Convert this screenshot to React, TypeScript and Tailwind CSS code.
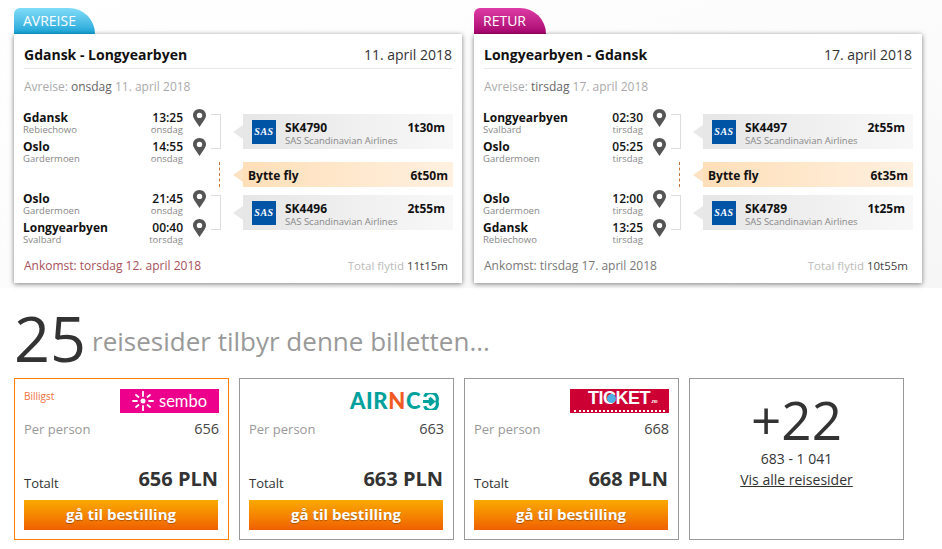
import React from "react";

const Pin = () => (
  <svg width="13" height="18" viewBox="0 0 13 18" className="block">
    <path fillRule="evenodd" fill="#555" d="M6.5 0C2.9 0 0 2.8 0 6.3c0 1.7.7 3 1.6 4.4L6.5 18l4.9-7.3c.9-1.4 1.6-2.7 1.6-4.4C13 2.8 10.100 0 6.500 0zm0 3.700a2.700 2.700 0 1 1 0 5.400 2.700 2.700 0 0 1 0-5.400z" />
  </svg>
);

const Stop = ({ city, place, time, day }: { city: string; place: string; time: string; day: string }) => (
  <div className="flex h-[29px]">
    <div className="w-[160px] flex justify-between">
      <div>
        <div className="text-[12px] leading-[14px] font-bold text-[#111]">{city}</div>
        <div className="text-[9.5px] leading-[11px] -mt-px text-[#888]">{place}</div>
      </div>
      <div className="text-right">
        <div className="text-[12px] leading-[14px] font-semibold text-[#111]">{time}</div>
        <div className="text-[9.5px] leading-[11px] -mt-px text-[#888]">{day}</div>
      </div>
    </div>
    <div className="ml-[10px] -mt-[2px]">
      <Pin />
    </div>
  </div>
);

const Flight = ({ code, dur }: { code: string; dur: string }) => (
  <div className="flex items-center">
    <div className="w-0 h-0 border-y-[7px] border-y-transparent border-r-[10px] border-r-[#e8e8e8]" />
    <div className="w-[210px] h-[35px] flex items-center pl-[9px] pr-[8px] bg-gradient-to-r from-[#e6e6e6] to-[#f8f8f8]">
      <div className="w-[24px] h-[24px] bg-[#0054a6] flex items-center justify-center shrink-0 text-white italic font-bold text-[10px] tracking-[0.5px] font-['Liberation_Serif',serif]">
        SAS
      </div>
      <div className="ml-[9px] flex-1 pt-[3px]">
        <div className="flex justify-between text-[12px] leading-[14px] font-bold text-[#111]">
          <span>{code}</span>
          <span>{dur}</span>
        </div>
        <div className="text-[9.5px] leading-[11px] text-[#888]">SAS Scandinavian Airlines</div>
      </div>
    </div>
  </div>
);

const Bracket = () => <div className="w-[10px] h-[35px] border border-l-0 border-[#ddd]" />;

type S = { city: string; place: string; time: string; day: string };

const Card = ({
  tag, tagCls, tagW, route, date, dep, stops, f1, f2, change, arrival, arrCls, total, totCls,
}: {
  tag: string; tagCls: string; tagW: string; route: string; date: string; dep: string; stops: S[];
  f1: [string, string]; f2: [string, string]; change: string; arrival: string; arrCls: string; total: string; totCls: string;
}) => (
  <div className="w-[448px]">
    <div className={`h-[26px] pl-[9px] rounded-tl-[6px] rounded-tr-[26px] text-[14px] leading-[26px] text-white ${tagW} ${tagCls}`}>{tag}</div>
    <div className="h-[249px] bg-white shadow-[0_1px_5px_rgba(0,0,0,0.5)] px-[10px]">
      <div className="h-[35px] pt-[6px] flex justify-between items-center border-b border-[#e8e8e8] text-[14px]">
        <span className="font-bold text-[#111]">{route}</span>
        <span className="text-[#333]">{date}</span>
      </div>
      <div className="h-[36px] flex items-center text-[12px] text-[#aaa]">
        <span>Avreise:&nbsp;</span>
        <span className="text-[#666]">{dep.split(" ")[0]}&nbsp;</span>
        <span>{dep.split(" ").slice(1).join(" ")}</span>
      </div>
      <div className="flex h-[139px] mt-[6px]">
        <div className="w-[184px] -ml-px">
          {stops.slice(0, 2).map((s) => <Stop key={s.city + s.time} {...s} />)}
          <div className="h-[23px]" />
          {stops.slice(2).map((s) => <Stop key={s.city + s.time} {...s} />)}
        </div>
        <div className="w-[10px] ml-[5px] mr-[12px] flex flex-col items-end pt-[3px]">
          <Bracket />
          <div className="h-[25px] mt-[13px] mr-px border-r border-dashed border-[#c8743c]" />
          <div className="mt-[8px]"><Bracket /></div>
        </div>
        <div className="pt-[3px]">
          <Flight code={f1[0]} dur={f1[1]} />
          <div className="flex items-center mt-[13px]">
            <div className="w-0 h-0 border-y-[7px] border-y-transparent border-r-[10px] border-r-[#fde3c4]" />
            <div className="w-[210px] h-[25px] pt-[2px] flex items-center justify-between pl-[5px] pr-[5px] bg-gradient-to-r from-[#ffdfb8] to-[#fff0e0] text-[12px] font-bold text-[#111]">
              <span>Bytte fly</span>
              <span>{change}</span>
            </div>
          </div>
          <div className="mt-[8px]"><Flight code={f2[0]} dur={f2[1]} /></div>
        </div>
      </div>
      <div className="flex justify-between items-center h-[24px] mt-[4px] text-[12px]">
        <span className={arrCls}>{arrival}</span>
        <span className="pr-[4px] text-[11.5px]">
          <span className="text-[#bbb]">Total flytid </span>
          <span className={totCls}>{total}</span>
        </span>
      </div>
    </div>
  </div>
);

const Sembo = () => (
  <div className="w-[99px] h-[24px] bg-[#ec008c] flex items-center justify-center gap-[5px] text-white text-[16.5px] font-['Lato',sans-serif]">
    <svg width="22" height="20" viewBox="-11 -10 22 20" stroke="#fff" strokeWidth="1.800" strokeLinecap="round">
      <circle cx="0" cy="0" r="2.500" fill="#fff" stroke="none" />
      <path d="M0-9.500V-5M0 5V9.500M-10 0H-6M6 0H10M-7-6L-4.500-4M7-6L4.500-4M-7 6L-4.500 4M7 6L4.500 4" />
    </svg>
    <span>sembo</span>
  </div>
);

const Airnco = () => (
  <div className="w-[99px] h-[24px] flex items-center justify-end pr-[5px] font-['Lato',sans-serif] font-black text-[22px] leading-none tracking-[0.6px] text-[#00a19c]">
    <span>AIR</span><span className="text-[#f15a22]">N</span><span>C</span>
    <svg width="17" height="17" viewBox="0 0 16 16" fill="none" stroke="#00a19c" strokeWidth="3" className="ml-px">
      <path d="M2.500 3.500A6 6 0 0 1 14 8 6 6 0 0 1 2.500 12.500M1 8H10M7 4.500L10.500 8 7 11.500" />
    </svg>
  </div>
);

const Ticket = () => (
  <div className="relative w-[99px] h-[24px] bg-[#cc0033] flex justify-center pl-[6px] text-white font-bold text-[18px] tracking-[-0.5px] leading-[19px] font-['Liberation_Sans',sans-serif]">
    <span>TI</span>
    <span className="relative">
      C
      <span className="absolute left-[4px] top-[5px] w-[9px] h-[9px] rounded-full bg-[#4fb0e6]" />
    </span>
    <span>KET</span>
    <span className="text-[5px] leading-[5px] mt-[10px] ml-px">.no</span>
    <div className="absolute left-[4px] right-[4px] bottom-[1px] border-b-2 border-dotted border-white" />
  </div>
);

const Offer = ({ logo, price, best }: { logo: React.ReactNode; price: string; best?: boolean }) => (
  <div className={`w-[215px] h-[162px] border px-[9px] pt-[10px] ${best ? "border-[#ff8000]" : "border-[#999]"}`}>
    <div className="flex justify-between items-start">
      <span className="text-[10px] leading-[14px] text-[#f2703a]">{best ? "Billigst" : ""}</span>
      {logo}
    </div>
    <div className="flex justify-between items-center mt-[8px] h-[18px]">
      <span className="text-[13px] text-[#999]">Per person</span>
      <span className="text-[14.5px] text-[#444] -mt-[2px]">{price}</span>
    </div>
    <div className="flex justify-between items-end mt-[29px] mr-px h-[24px]">
      <span className="text-[13px] leading-[18px] text-[#333]">Totalt</span>
      <span className="text-[20px] leading-[26px] font-bold text-[#333]">{price} PLN</span>
    </div>
    <div className="mt-[8px] mr-px pb-px h-[30px] flex items-center justify-center bg-gradient-to-b from-[#f9a900] to-[#ef5f00] text-[15px] font-bold text-white [text-shadow:0_1px_1px_rgba(0,0,0,0.3)]">
      gå til bestilling
    </div>
  </div>
);

export default function App() {
  return (
    <div className="w-[942px] h-[549px] bg-white overflow-hidden font-['Open_Sans',sans-serif]">
      <div className="h-[288px] pt-[8px] pl-[14px] flex gap-[12px] bg-gradient-to-br from-white via-[#fcfcfc] to-[#f6f6f6]">
        <Card
          tag="AVREISE" tagW="w-[81px]" tagCls="bg-gradient-to-b from-[#7fdcf8] to-[#0aa5d8]"
          route="Gdansk - Longyearbyen" date="11. april 2018" dep="onsdag 11. april 2018"
          stops={[
            { city: "Gdansk", place: "Rebiechowo", time: "13:25", day: "onsdag" },
            { city: "Oslo", place: "Gardermoen", time: "14:55", day: "onsdag" },
            { city: "Oslo", place: "Gardermoen", time: "21:45", day: "onsdag" },
            { city: "Longyearbyen", place: "Svalbard", time: "00:40", day: "torsdag" },
          ]}
          f1={["SK4790", "1t30m"]} f2={["SK4496", "2t55m"]} change="6t50m"
          arrival="Ankomst: torsdag 12. april 2018" arrCls="text-[#a8505a]"
          total="11t15m" totCls="text-[#444]"
        />
        <Card
          tag="RETUR" tagW="w-[72px]" tagCls="bg-gradient-to-b from-[#dd3aa5] to-[#a8006e]"
          route="Longyearbyen - Gdansk" date="17. april 2018" dep="tirsdag 17. april 2018"
          stops={[
            { city: "Longyearbyen", place: "Svalbard", time: "02:30", day: "tirsdag" },
            { city: "Oslo", place: "Gardermoen", time: "05:25", day: "tirsdag" },
            { city: "Oslo", place: "Gardermoen", time: "12:00", day: "tirsdag" },
            { city: "Gdansk", place: "Rebiechowo", time: "13:25", day: "tirsdag" },
          ]}
          f1={["SK4497", "2t55m"]} f2={["SK4789", "1t25m"]} change="6t35m"
          arrival="Ankomst: tirsdag 17. april 2018" arrCls="text-[#777]"
          total="10t55m" totCls="text-[#444]"
        />
      </div>
      <div className="h-[90px] pl-[14px] flex items-center">
        <span className="text-[63px] leading-none text-[#333] mt-[9px]">25</span>
        <span className="ml-[6px] text-[26px] leading-none text-[#999] mt-[15px]">reisesider tilbyr denne billetten...</span>
      </div>
      <div className="pl-[14px] flex gap-[10px]">
        <Offer best logo={<Sembo />} price="656" />
        <Offer logo={<Airnco />} price="663" />
        <Offer logo={<Ticket />} price="668" />
        <div className="w-[215px] h-[162px] border border-[#999] flex flex-col items-center text-[#333]">
          <div className="text-[53px] leading-[50px] mt-[16px]">+22</div>
          <div className="text-[14px] leading-[18px] mt-[5px]">683 - 1 041</div>
          <div className="text-[14px] leading-[20px] mt-[2px] underline">Vis alle reisesider</div>
        </div>
      </div>
    </div>
  );
}
